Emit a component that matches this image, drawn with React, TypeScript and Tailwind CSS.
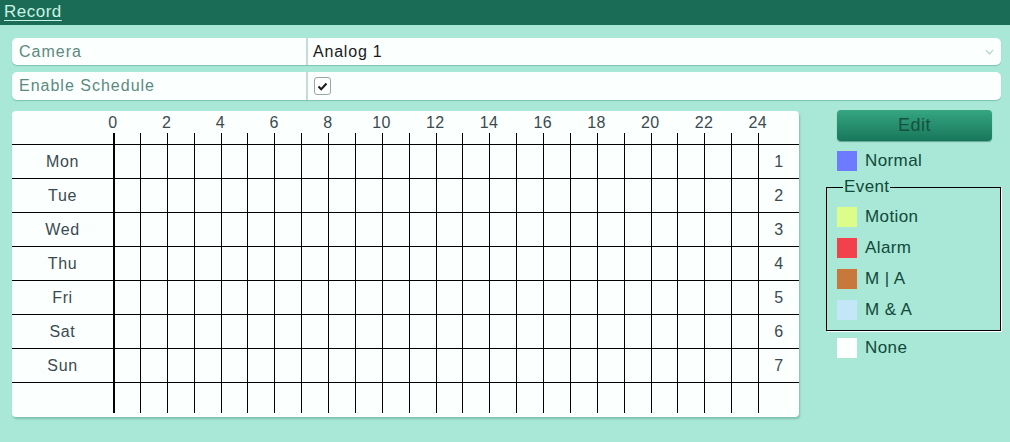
import React from 'react';

const hours = Array.from({ length: 24 }, (_, i) => i);
const days = ['Mon', 'Tue', 'Wed', 'Thu', 'Fri', 'Sat', 'Sun'];
const ticks = [0, 2, 4, 6, 8, 10, 12, 14, 16, 18, 20, 22, 24];

const eventTypes = [
    { name: 'Motion', color: 'bg-[#dcfd8a]' },
    { name: 'Alarm', color: 'bg-[#f3414b]' },
    { name: 'M | A', color: 'bg-[#c7783a]' },
    { name: 'M & A', color: 'bg-[#c3e6f8]' },
];

function Swatch({ color, label }: { color: string; label: string }) {
    return (
        <div className="flex items-center h-[20px]">
            <div className={`w-[20px] h-[20px] shrink-0 ${color}`} />
            <span className="ml-[8px] text-[17px] tracking-[0.4px] text-[#10493a]">{label}</span>
        </div>
    );
}

function HourCells({ height }: { height: string }) {
    return (
        <>
            {hours.map((h) => (
                <div
                    key={h}
                    className={`w-[26.875px] shrink-0 ${height} border-black ${h === 0 ? 'border-l-2' : 'border-l'}`}
                />
            ))}
        </>
    );
}

export default function App() {
    return (
        <div className="w-[1010px] h-[442px] bg-[#a9e7d6] overflow-hidden font-['Liberation_Sans',Arial,sans-serif]">
            {/* title bar */}
            <div className="h-[25px] bg-[#1b6c56] pl-[4px] flex items-start">
                <span className="text-[17px] leading-[24px] tracking-[0.5px] text-[#c9f3e3] underline underline-offset-[3px] decoration-1 pr-[2px]">
                    Record
                </span>
            </div>

            <div className="pl-[12px] pr-[9px] pt-[13px]">
                {/* camera row */}
                <div className="flex h-[27px] bg-[#fbfffe] rounded-[5px] shadow-[0_1px_1px_rgba(0,80,60,0.25)]">
                    <div className="w-[296px] shrink-0 pl-[7px] flex items-center text-[16px] tracking-[1px] text-[#5c8a80] border-r-2 border-[#c4dcd5]">
                        Camera
                    </div>
                    <div className="flex-1 flex items-center justify-between pl-[5px] pr-[7px] text-[16px] tracking-[0.8px] text-[#1a1a1a]">
                        <span>Analog 1</span>
                        <svg width="9" height="6" viewBox="0 0 9 6" fill="none" stroke="#b9d6cf" strokeWidth="1.2">
                            <path d="M1 1 L4.5 5 L8 1" />
                        </svg>
                    </div>
                </div>

                {/* enable schedule row */}
                <div className="flex h-[28px] mt-[7px] bg-[#fbfffe] rounded-[5px] shadow-[0_1px_1px_rgba(0,80,60,0.25)]">
                    <div className="w-[296px] shrink-0 pl-[7px] flex items-center text-[16px] tracking-[1px] text-[#5c8a80] border-r-2 border-[#c4dcd5]">
                        Enable Schedule
                    </div>
                    <div className="flex-1 flex items-center pl-[6px]">
                        <div className="w-[17px] h-[18px] rounded-[3px] border border-[#9aa8a4] bg-white flex items-center justify-center">
                            <svg width="11" height="9" viewBox="0 0 11 9" fill="none" stroke="#1a1a1a" strokeWidth="2">
                                <path d="M1.5 4.5 L4.2 7.2 L9.5 1.5" />
                            </svg>
                        </div>
                    </div>
                </div>

                <div className="flex mt-[11px]">
                    {/* schedule grid */}
                    <div className="w-[787px] h-[306px] shrink-0 bg-[#fbfffe] rounded-[4px] shadow-[1px_2px_2px_rgba(0,80,60,0.25)] text-[16px] tracking-[0.6px] text-[#3b4a50]">
                        <div className="h-[33px] flex flex-col">
                            <div className="h-[22px] flex pl-[74px]">
                                {ticks.map((t) => (
                                    <div key={t} className="w-[53.75px] shrink-0 text-center leading-[22px] pt-[1px]">
                                        {t}
                                    </div>
                                ))}
                            </div>
                            <div className="h-[11px] flex pl-[101px]">
                                <HourCells height="h-[11px]" />
                                <div className="w-[1px] h-[11px] bg-black" />
                            </div>
                        </div>
                        {days.map((d, i) => (
                            <div key={d} className="h-[34px] flex border-t border-black">
                                <div className="w-[101px] shrink-0 flex items-center justify-center">{d}</div>
                                <HourCells height="h-[33px]" />
                                <div className="flex-1 border-l border-black flex items-center justify-center">{i + 1}</div>
                            </div>
                        ))}
                        <div className="h-[31px] flex border-t border-black">
                            <div className="w-[101px] shrink-0" />
                            <HourCells height="h-[30px]" />
                            <div className="flex-1 border-l border-black" />
                        </div>
                    </div>

                    {/* legend */}
                    <div className="ml-[27px] w-[175px] shrink-0 flex flex-col">
                        <div className="ml-[11px] w-[155px] h-[31px] -mt-[1px] rounded-[4px] bg-gradient-to-b from-[#35a681] to-[#17775a] shadow-[0_1px_1px_rgba(0,60,40,0.4)] flex items-center justify-center text-[18px] tracking-[0.5px] text-[#16523f]">
                            Edit
                        </div>
                        <div className="ml-[11px] mt-[10px]">
                            <Swatch color="bg-[#6e7bff]" label="Normal" />
                        </div>
                        <fieldset className="mt-[9px] h-[151px] border border-black shadow-[1px_1px_0_#ffffff] px-[10px]">
                            <legend className="ml-[6px] px-[1px] text-[17px] leading-[14px] tracking-[0.4px] text-[#10493a]">Event</legend>
                            <div className="flex flex-col gap-[11px] mt-[13px]">
                                {eventTypes.map((e) => (
                                    <Swatch key={e.name} color={e.color} label={e.name} />
                                ))}
                            </div>
                        </fieldset>
                        <div className="ml-[11px] mt-[7px]">
                            <Swatch color="bg-[#fbfffe]" label="None" />
                        </div>
                    </div>
                </div>
            </div>
        </div>
    );
}
